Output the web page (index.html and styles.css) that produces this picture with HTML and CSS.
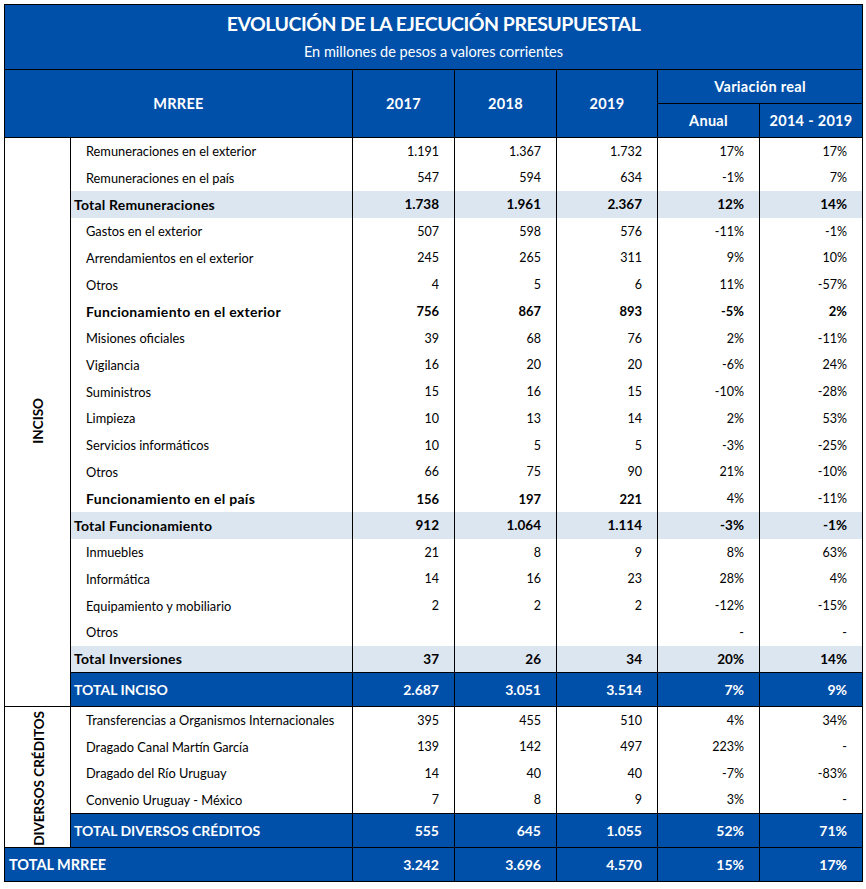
FILE: index.html
```html
<!DOCTYPE html>
<html lang="es">
<head>
<meta charset="utf-8">
<title>Evolución de la ejecución presupuestal</title>
<link rel="stylesheet" href="styles.css">
</head>
<body>
<table class="budget">
  <colgroup>
    <col class="c-cat"><col class="c-label"><col class="c-num"><col class="c-num"><col class="c-num3"><col class="c-num"><col class="c-last">
  </colgroup>
  <thead>
    <tr class="title-row">
      <th colspan="7">
        <div class="title">EVOLUCIÓN DE LA EJECUCIÓN PRESUPUESTAL</div>
        <div class="subtitle">En millones de pesos a valores corrientes</div>
      </th>
    </tr>
    <tr class="head-row">
      <th colspan="2" rowspan="2">MRREE</th>
      <th rowspan="2">2017</th>
      <th rowspan="2">2018</th>
      <th rowspan="2">2019</th>
      <th colspan="2">Variación real</th>
    </tr>
    <tr class="head-row">
      <th>Anual</th>
      <th>2014 - 2019</th>
    </tr>
  </thead>
  <tbody>
    <tr><td class="cat" rowspan="21"><span class="vert">INCISO</span></td><td class="lbl">Remuneraciones en el exterior</td><td>1.191</td><td>1.367</td><td>1.732</td><td>17%</td><td>17%</td></tr>
    <tr><td class="lbl">Remuneraciones en el país</td><td>547</td><td>594</td><td>634</td><td>-1%</td><td>7%</td></tr>
    <tr class="sub"><td class="lbl">Total Remuneraciones</td><td>1.738</td><td>1.961</td><td>2.367</td><td>12%</td><td>14%</td></tr>
    <tr><td class="lbl">Gastos en el exterior</td><td>507</td><td>598</td><td>576</td><td>-11%</td><td>-1%</td></tr>
    <tr><td class="lbl">Arrendamientos en el exterior</td><td>245</td><td>265</td><td>311</td><td>9%</td><td>10%</td></tr>
    <tr><td class="lbl">Otros</td><td>4</td><td>5</td><td>6</td><td>11%</td><td>-57%</td></tr>
    <tr class="bold"><td class="lbl">Funcionamiento en el exterior</td><td>756</td><td>867</td><td>893</td><td>-5%</td><td>2%</td></tr>
    <tr><td class="lbl">Misiones oficiales</td><td>39</td><td>68</td><td>76</td><td>2%</td><td>-11%</td></tr>
    <tr><td class="lbl">Vigilancia</td><td>16</td><td>20</td><td>20</td><td>-6%</td><td>24%</td></tr>
    <tr><td class="lbl">Suministros</td><td>15</td><td>16</td><td>15</td><td>-10%</td><td>-28%</td></tr>
    <tr><td class="lbl">Limpieza</td><td>10</td><td>13</td><td>14</td><td>2%</td><td>53%</td></tr>
    <tr><td class="lbl">Servicios informáticos</td><td>10</td><td>5</td><td>5</td><td>-3%</td><td>-25%</td></tr>
    <tr><td class="lbl">Otros</td><td>66</td><td>75</td><td>90</td><td>21%</td><td>-10%</td></tr>
    <tr class="bold"><td class="lbl">Funcionamiento en el país</td><td>156</td><td>197</td><td>221</td><td class="reg">4%</td><td class="reg">-11%</td></tr>
    <tr class="sub"><td class="lbl">Total Funcionamiento</td><td>912</td><td>1.064</td><td>1.114</td><td>-3%</td><td>-1%</td></tr>
    <tr><td class="lbl">Inmuebles</td><td>21</td><td>8</td><td>9</td><td>8%</td><td>63%</td></tr>
    <tr><td class="lbl">Informática</td><td>14</td><td>16</td><td>23</td><td>28%</td><td>4%</td></tr>
    <tr><td class="lbl">Equipamiento y mobiliario</td><td>2</td><td>2</td><td>2</td><td>-12%</td><td>-15%</td></tr>
    <tr><td class="lbl">Otros</td><td></td><td></td><td></td><td>-</td><td>-</td></tr>
    <tr class="sub"><td class="lbl">Total Inversiones</td><td>37</td><td>26</td><td>34</td><td>20%</td><td>14%</td></tr>
    <tr class="total"><td class="lbl">TOTAL INCISO</td><td>2.687</td><td>3.051</td><td>3.514</td><td>7%</td><td>9%</td></tr>
    <tr><td class="cat" rowspan="5"><span class="vert vert-low">DIVERSOS CRÉDITOS</span></td><td class="lbl">Transferencias a Organismos Internacionales</td><td>395</td><td>455</td><td>510</td><td>4%</td><td>34%</td></tr>
    <tr><td class="lbl">Dragado Canal Martín García</td><td>139</td><td>142</td><td>497</td><td>223%</td><td>-</td></tr>
    <tr><td class="lbl">Dragado del Río Uruguay</td><td>14</td><td>40</td><td>40</td><td>-7%</td><td>-83%</td></tr>
    <tr><td class="lbl">Convenio Uruguay - México</td><td>7</td><td>8</td><td>9</td><td>3%</td><td>-</td></tr>
    <tr class="total"><td class="lbl">TOTAL DIVERSOS CRÉDITOS</td><td>555</td><td>645</td><td>1.055</td><td>52%</td><td>71%</td></tr>
    <tr class="total grand"><td class="lbl" colspan="2">TOTAL MRREE</td><td>3.242</td><td>3.696</td><td>4.570</td><td>15%</td><td>17%</td></tr>
  </tbody>
</table>
</body>
</html>
```

FILE: styles.css
```css
html, body {
  margin: 0;
  padding: 0;
  background: #fff;
}
body {
  padding: 4px 0 0 4px;
  font-family: Lato, "Open Sans", "Liberation Sans", sans-serif;
  color: #000;
}
.budget {
  border-collapse: collapse;
  table-layout: fixed;
  width: 858px;
  border: 1px solid #000;
}
.c-cat { width: 66px; }
.c-label { width: 282px; }
.c-num { width: 102px; }
.c-num3 { width: 101px; }
.c-last { width: 103px; }

.budget th {
  background: #0050aa;
  color: #fff;
  font-weight: 700;
  border: 1px solid #000;
  padding: 0;
}
.title-row { height: 65px; }
.title-row th { text-align: center; vertical-align: top; }
.title {
  font-size: 19.5px;
  font-weight: 700;
  letter-spacing: -0.5px;
  margin-top: 7px;
  line-height: 24px;
}
.subtitle {
  font-size: 14.5px;
  font-weight: 400;
  margin-top: 8px;
  line-height: 16px;
}
.head-row { height: 34px; }
.head-row th {
  font-size: 14.5px;
  letter-spacing: 0.3px;
  text-align: center;
  vertical-align: middle;
}

.budget td {
  border-left: 1px solid #000;
  border-right: 1px solid #000;
  padding: 0 15px 0 0;
  text-align: right;
  font-size: 12.5px;
  vertical-align: middle;
  white-space: nowrap;
  overflow: hidden;
}
.budget tbody tr { height: 26.75px; }
.budget td.lbl {
  text-align: left;
  padding: 0 0 0 15px;
  font-size: 12.8px;
}
.budget td.cat {
  padding: 0;
  text-align: center;
  border-bottom: 1px solid #000;
}
.vert {
  display: inline-block;
  writing-mode: vertical-rl;
  transform: rotate(180deg);
  font-weight: 700;
  font-size: 13.5px;
}
.vert-low { transform: rotate(180deg) translateX(-1px) translateY(-3px); }

.bold td { font-weight: 700; font-size: 13px; }
.bold td.lbl { font-size: 14px; letter-spacing: 0.3px; }
.bold td.reg { font-weight: 400; font-size: 12.5px; }

.sub td { background: #dce6f1; font-weight: 700; font-size: 13.5px; }
.sub td.lbl { padding-left: 3px; font-size: 14px; letter-spacing: 0.2px; }

.budget tbody tr.total { height: 34px; }
.total td {
  background: #0050aa;
  color: #fff;
  font-weight: 700;
  font-size: 14px;
  border-top: 1px solid #000;
  border-bottom: 1px solid #000;
}
.total td.lbl { padding-left: 3px; font-size: 14px; }
.grand td.lbl { padding-left: 4px; font-size: 14.5px; }
```
